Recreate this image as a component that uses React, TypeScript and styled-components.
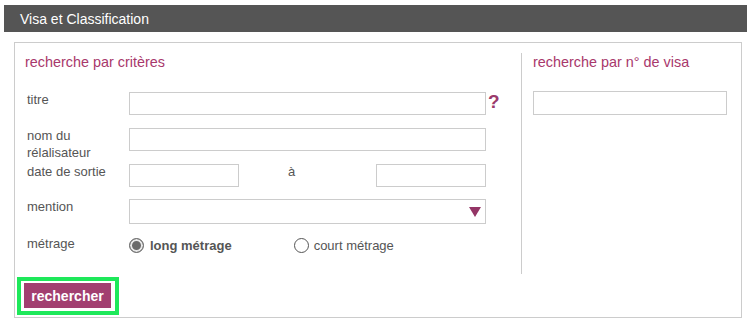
import * as React from 'react';
import styled, { createGlobalStyle } from 'styled-components';

const GlobalStyle = createGlobalStyle`
  body {
    margin: 0;
    background: #fff;
    font-family: "Liberation Sans", Arial, sans-serif;
  }
`;

const Page = styled.div`
  padding: 5px 0 0 4px;
`;

const Header = styled.div`
  height: 27px;
  background: #555555;
  color: #fff;
  font-size: 14px;
  display: flex;
  align-items: center;
  padding-left: 16px;
`;

const Panel = styled.div`
  margin: 10px 5px 0 10px;
  border: 1px solid #cccccc;
`;

const Columns = styled.div`
  display: flex;
  padding-top: 10px;
`;

const LeftCol = styled.div`
  width: 506px;
  padding: 0 0 21px 10px;
  box-sizing: border-box;
`;

const RightCol = styled.div`
  flex: 1;
  border-left: 1px solid #cccccc;
  padding-left: 11px;
`;

const SectionTitle = styled.h2`
  margin: 0;
  font-size: 14.4px;
  font-weight: normal;
  line-height: 18px;
  color: #a8386c;
`;

const Form = styled.div`
  margin: 21px 0 0 2px;
`;

const Row = styled.div<{ $top: number }>`
  display: grid;
  grid-template-columns: 102px 357px auto;
  align-items: start;
  margin-top: ${(p) => p.$top}px;
`;

const Label = styled.span`
  font-size: 13px;
  line-height: 17px;
  margin-top: -1px;
  color: #555555;
`;

const TextInput = styled.input<{ $width: number }>`
  box-sizing: border-box;
  width: ${(p) => p.$width}px;
  height: 23px;
  margin: 0;
  border: 1px solid #cccccc;
  background: #fff;
  outline: none;
`;

const VisaInput = styled(TextInput)`
  height: 24px;
  margin-top: 20px;
`;

const Help = styled.span`
  margin-left: 2px;
  font-size: 19px;
  font-weight: bold;
  line-height: 20px;
  color: #9b3a6b;
`;

const DateField = styled.div`
  display: flex;
  align-items: flex-start;
`;

const DateSep = styled.span`
  margin: -1px auto 0 49px;
  font-size: 13px;
  line-height: 17px;
  color: #555555;
`;

const Select = styled.div`
  box-sizing: border-box;
  height: 25px;
  border: 1px solid #cccccc;
  display: flex;
  align-items: center;
  justify-content: flex-end;
  padding-right: 4px;
`;

const Arrow = styled.span`
  width: 0;
  height: 0;
  border-left: 6px solid transparent;
  border-right: 6px solid transparent;
  border-top: 10px solid #943566;
`;

const RadioGroup = styled.div`
  display: flex;
  align-items: center;
  margin-top: 2px;
  white-space: nowrap;
`;

const RadioMark = styled.span<{ $checked?: boolean }>`
  box-sizing: border-box;
  width: 15px;
  height: 15px;
  border-radius: 50%;
  border: 1px solid ${(p) => (p.$checked ? '#6f6f6f' : '#555555')};
  background: ${(p) => (p.$checked ? '#6a6a6a' : '#fff')};
  box-shadow: ${(p) => (p.$checked ? 'inset 0 0 0 2px #e8e8e8' : 'none')};
`;

const RadioText = styled.span<{ $checked?: boolean }>`
  margin: 0 ${(p) => (p.$checked ? 62 : 0)}px 0 ${(p) => (p.$checked ? 6 : 5)}px;
  font-size: 13px;
  font-weight: ${(p) => (p.$checked ? 'bold' : 'normal')};
  color: #555555;
`;

const Highlight = styled.div`
  display: inline-block;
  margin: 3px 0 2px 2px;
  border: 4px solid #1ee85a;
  padding: 2px 4px 3px 3px;
`;

const SearchButton = styled.button`
  display: block;
  height: 25px;
  width: 87px;
  padding: 0;
  border: none;
  background: #a23f70;
  color: #fff;
  font-family: "Liberation Sans", Arial, sans-serif;
  font-size: 14px;
  font-weight: bold;
`;

export default function App() {
  const [longFormat, setLongFormat] = React.useState(true);

  return (
    <Page>
      <GlobalStyle />
      <Header>Visa et Classification</Header>
      <Panel>
        <Columns>
          <LeftCol>
            <SectionTitle>recherche par critères</SectionTitle>
            <Form>
              <Row $top={0}>
                <Label>titre</Label>
                <TextInput $width={357} />
                <Help>?</Help>
              </Row>
              <Row $top={13}>
                <Label>
                  nom du
                  <br />
                  rélalisateur
                </Label>
                <TextInput $width={357} />
              </Row>
              <Row $top={3}>
                <Label>date de sortie</Label>
                <DateField>
                  <TextInput $width={110} />
                  <DateSep>à</DateSep>
                  <TextInput $width={110} />
                </DateField>
              </Row>
              <Row $top={12}>
                <Label>mention</Label>
                <Select>
                  <Arrow />
                </Select>
              </Row>
              <Row $top={12}>
                <Label>métrage</Label>
                <RadioGroup>
                  <RadioMark $checked={longFormat} onClick={() => setLongFormat(true)} />
                  <RadioText $checked>long métrage</RadioText>
                  <RadioMark $checked={!longFormat} onClick={() => setLongFormat(false)} />
                  <RadioText>court métrage</RadioText>
                </RadioGroup>
              </Row>
            </Form>
          </LeftCol>
          <RightCol>
            <SectionTitle>recherche par n° de visa</SectionTitle>
            <VisaInput $width={194} />
          </RightCol>
        </Columns>
        <Highlight>
          <SearchButton>rechercher</SearchButton>
        </Highlight>
      </Panel>
    </Page>
  );
}
